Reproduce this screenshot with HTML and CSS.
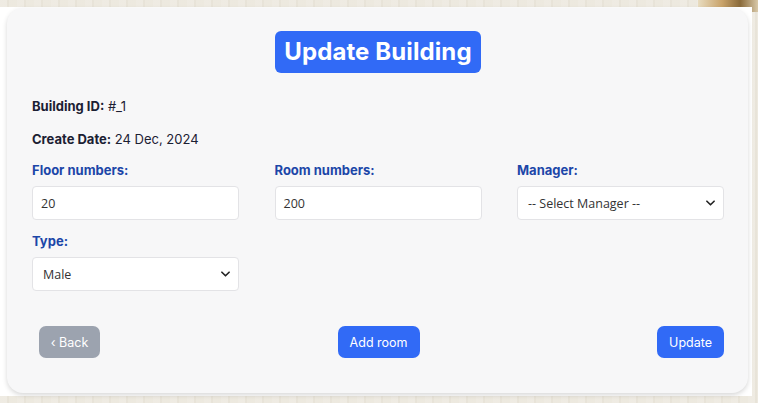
FILE: index.html
```html
<!DOCTYPE html>
<html>
<head>
<meta charset="utf-8">
<link rel="stylesheet" href="styles.css">
</head>
<body>
<div class="backdrop">
  <div class="flower"></div>
  <div class="sheet">
    <div class="card">
      <div class="title-row"><h1 class="title">Update Building</h1></div>
      <p class="meta"><b>Building ID:</b> #_1</p>
      <p class="meta"><b>Create Date:</b> 24 Dec, 2024</p>
      <div class="grid">
        <div class="field">
          <label class="label">Floor numbers:</label>
          <div class="input">20</div>
        </div>
        <div class="field">
          <label class="label">Room numbers:</label>
          <div class="input">200</div>
        </div>
        <div class="field">
          <label class="label">Manager:</label>
          <div class="input select">-- Select Manager --<svg class="chev" viewBox="0 0 10 6" width="9" height="6"><path d="M1 1l4 4 4-4" fill="none" stroke="#222" stroke-width="1.8" stroke-linecap="round" stroke-linejoin="round"/></svg></div>
        </div>
        <div class="field">
          <label class="label">Type:</label>
          <div class="input select">Male<svg class="chev" viewBox="0 0 10 6" width="9" height="6"><path d="M1 1l4 4 4-4" fill="none" stroke="#222" stroke-width="1.8" stroke-linecap="round" stroke-linejoin="round"/></svg></div>
        </div>
      </div>
      <div class="actions">
        <button class="btn back">&lsaquo; Back</button>
        <button class="btn primary">Add room</button>
        <button class="btn primary">Update</button>
      </div>
    </div>
  </div>
</div>
</body>
</html>
```
FILE: styles.css
```css
* { box-sizing: border-box; }
html, body { margin: 0; padding: 0; }
body {
  width: 758px;
  height: 403px;
  overflow: hidden;
  font-family: "Inter", "Noto Sans", sans-serif;
  background: #ece8de;
  background-image: repeating-linear-gradient(90deg, rgba(255,255,255,0.14) 0 7px, rgba(190,180,160,0.09) 7px 9px, rgba(255,255,255,0.04) 9px 17px);
}
.backdrop {
  position: relative;
  padding-top: 7px;
  height: 403px;
}
.flower {
  position: absolute;
  right: 0;
  top: 0;
  width: 60px;
  height: 12px;
  background: linear-gradient(90deg, #e8dcc0, #c9a36a 40%, #8a6a3a 70%, #d8c8a8);
}
.sheet {
  position: relative;
  width: 752px;
  height: 389px;
  background: #ffffff;
  padding: 1px 4px 0 7px;
}
.card {
  background: #f7f7f8;
  border-radius: 16px;
  height: 385px;
  box-shadow: 0 2px 5px rgba(0,0,0,0.16);
  padding: 23px 24px 0 25px;
}
.title-row { display: flex; justify-content: center; }
.title {
  margin: 0;
  background: #316af6;
  color: #fff;
  font-size: 24px;
  font-weight: 700;
  height: 42px;
  line-height: 42px;
  padding: 0 9px;
  border-radius: 6px;
  letter-spacing: 0.1px;
}
.meta {
  margin: 0;
  font-size: 13px;
  color: #1b2033;
  height: 33px;
  line-height: 33px;
}
.meta:first-of-type { margin-top: 17px; }
.meta b { font-weight: 700; }
.grid {
  display: grid;
  grid-template-columns: 207px 207px 207px;
  column-gap: 35.5px;
  row-gap: 10px;
  margin-top: 3px;
}
.field { display: flex; flex-direction: column; }
.label {
  font-size: 13px;
  font-weight: 700;
  color: #1c46a8;
  height: 22px;
  line-height: 22px;
  margin-bottom: 5px;
}
.input {
  height: 34px;
  background: #fff;
  border: 1px solid #e3e3e6;
  border-radius: 4px;
  font-family: "Open Sans", "Noto Sans", sans-serif;
  font-size: 12.5px;
  color: #333;
  padding: 0 8px;
  display: flex;
  align-items: center;
}
.select { justify-content: space-between; padding: 0 8px 0 10px; }
.chev { flex: none; }
.actions {
  display: flex;
  justify-content: space-between;
  align-items: center;
  margin-top: 35px;
  padding-left: 7px;
}
.btn {
  border: none;
  height: 32px;
  border-radius: 7px;
  color: #fff;
  font-family: "Inter", "Noto Sans", sans-serif;
  font-size: 12.5px;
  padding: 0 12px;
  white-space: nowrap;
}
.back { background: #9ca3af; width: 61px; padding: 0; }
.primary { background: #316af6; }
```
